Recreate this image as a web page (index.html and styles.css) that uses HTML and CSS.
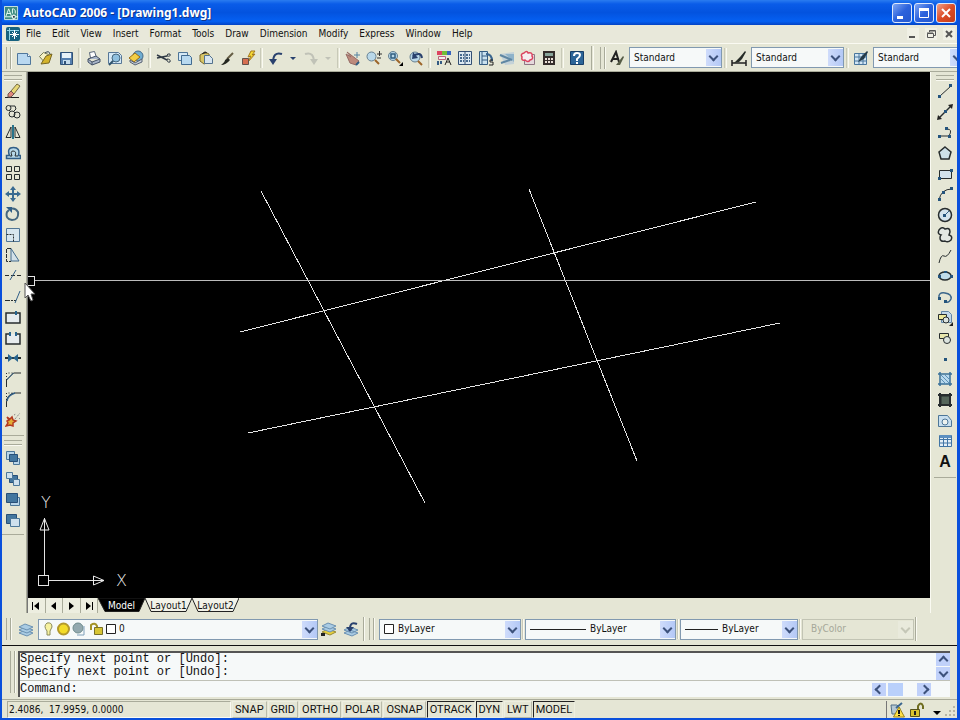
FILE: index.html
```
<!DOCTYPE html>
<html lang="en">
<head>
<meta charset="utf-8">
<title>AutoCAD 2006 - [Drawing1.dwg]</title>
<link rel="stylesheet" href="styles.css">
</head>
<body>
<div class="window">
<header class="titlebar">
  <svg class="app-icon" viewBox="0 0 16 16"><path fill="#3e8b80" stroke="#d5ece4" d="M.5.5h14v14H.5z"/><path fill="none" stroke="#e8fff5" d="M2 11 5 3l3 8M3 8h4M9 3v5M9 3h1q3 1 2 5M1 11.500h14M10.500 9v6"/><path fill="#173d42" stroke="#fff" d="M9 10h3v3H9z"/></svg>
  <h1>AutoCAD 2006 - [Drawing1.dwg]</h1>
  <div class="caption-buttons">
    <button class="cap" aria-label="Minimize"><svg viewBox="0 0 18 18"><path fill="#fff" d="M4 12h6v3H4z"/></svg></button>
    <button class="cap" aria-label="Maximize"><svg viewBox="0 0 18 18"><path fill="none" stroke="#fff" d="M4.500 4.500h9v9h-9z"/><path fill="#fff" d="M4 4h10v3H4z"/></svg></button>
    <button class="cap close" aria-label="Close"><svg viewBox="0 0 18 18"><path stroke="#fff" stroke-width="2" d="m5 5 8 8m0-8-8 8"/></svg></button>
  </div>
</header>
<nav class="menubar">
  <svg class="doc-icon" viewBox="0 0 14 14"><rect width="14" height="14" rx="2" fill="#17627f"/><path fill="none" stroke="#8fd4e8" d="M3.500 1v12M1 3.500h12"/><path stroke="#fff" d="M8.500 3v9M4 7.500h9M6 5l5 5m0-5-5 5"/></svg>
  <button>File</button><button>Edit</button><button>View</button><button>Insert</button><button>Format</button><button>Tools</button><button>Draw</button><button>Dimension</button><button>Modify</button><button>Express</button><button>Window</button><button>Help</button>
  <div class="doc-buttons">
    <button aria-label="Minimize drawing"><svg viewBox="0 0 12 12"><path fill="#555" d="M2 8h6v2H2z"/></svg></button>
    <button aria-label="Restore drawing"><svg viewBox="0 0 12 12"><path fill="none" stroke="#555" d="M4.500 4V2.500h6v5H8M2.500 5.500h6v4h-6zM4 3h6M2 5h6"/></svg></button>
    <button aria-label="Close drawing"><svg viewBox="0 0 12 12"><path stroke="#555" stroke-width="2" d="m3 3 6 6m0-6-6 6"/></svg></button>
  </div>
</nav>
<div class="toolbar standard" role="toolbar" aria-label="Standard">
  <span class="grip"></span>
  <div class="group">
    <button aria-label="New"><svg viewBox="0 0 16 16"><path fill="#b9d8f0" stroke="#50779c" d="M1.500 3.500h10l3 3v8h-13z"/><path fill="#fff" stroke="#50779c" d="M11.500 3.500v3h3"/></svg></button>
    <button aria-label="Open"><svg viewBox="0 0 16 16"><path fill="#f5f1c5" stroke="#777b55" d="m2.500 6.500 4-4 5 2-3 9z"/><path fill="#d3b32c" stroke="#776724" d="m4 14 5-8 6-2-3 9z"/><path fill="none" stroke="#2a3d4c" d="M8 3q4-3 5 1"/></svg></button>
    <button aria-label="Save"><svg viewBox="0 0 16 16"><path fill="#557fae" stroke="#315277" d="M2.500 2.500h12v12h-12z"/><path fill="#e8f2f8" d="M4 3h9v5H4z"/><path fill="#c5dced" d="M5 10h7v4H5z"/><path fill="#315277" d="M6 11h2v3H6z"/></svg></button>
  </div>
  <span class="sep"></span>
  <div class="group">
    <button aria-label="Plot"><svg viewBox="0 0 16 16"><path fill="#fff" stroke="#596678" d="M4.500 8 3.500 2.500l5-1 2 6"/><path fill="#a8b5c9" stroke="#445267" d="m2 9 8-3 4 3v3l-8 3-4-3zM2 9l4 3 8-3M6 12v3"/></svg></button>
    <button aria-label="Plot Preview"><svg viewBox="0 0 16 16"><path fill="#d5e9f6" stroke="#577797" d="M1.500 2.500h10l3 3v8h-13z"/><circle cx="9" cy="8" r="4" fill="#8fc0df" stroke="#46677e"/><path stroke="#31546e" stroke-width="2" d="m6 11-4 4"/></svg></button>
    <button aria-label="Publish"><svg viewBox="0 0 16 16"><circle cx="10" cy="6" r="5" fill="#70add0" stroke="#456a8a"/><path fill="#f2ce45" stroke="#9a6d16" d="m1 8 6-5 5 4-6 5z"/><path fill="#c8cfda" stroke="#576374" d="m2 10 5 3 7-4v3l-7 3-5-3z"/></svg></button>
  </div>
  <span class="sep"></span>
  <div class="group">
    <button aria-label="Cut"><svg viewBox="0 0 16 16"><path fill="none" stroke="#303a45" stroke-width="1.500" d="m1 5 10 5M1 8l10-2"/><path fill="none" stroke="#303a45" d="M11 6q0-3 3-2 1 3-3 2M11 9q4 0 3 3-3 1-3-3"/></svg></button>
    <button aria-label="Copy"><svg viewBox="0 0 16 16"><path fill="#d5e9f5" stroke="#4e7597" d="M1.500 2.500h9v8h-9z"/><path fill="#b8d9ef" stroke="#416b91" d="M4.500 5.500h8l2 2v7h-10z"/></svg></button>
    <button aria-label="Paste"><svg viewBox="0 0 16 16"><path fill="#d8c565" stroke="#77672d" d="m2 5 5-3 4 2 1 8-6 2-4-3z"/><path fill="#d7e5ef" stroke="#54728d" d="M6.500 5.500h5l3 3v5h-8z"/><path stroke="#333" d="m4 4 3-2 2 1"/></svg></button>
    <button aria-label="Match Properties"><svg viewBox="0 0 16 16"><path stroke="#665e45" stroke-width="2" d="m8 9 6-6"/><path fill="#242720" d="m9 8 2 2q-4 5-9 5 4-3 4-5z"/></svg></button>
    <button aria-label="Block Editor"><svg viewBox="0 0 16 16"><path fill="#f6da33" stroke="#a4781d" d="m11 1-3 6 3-1-3 6 7-8-3 1 3-4z"/><path fill="#d66e50" stroke="#63524c" d="M2.500 8.500h6v6h-6z"/></svg></button>
  </div>
  <span class="sep"></span>
  <div class="group">
    <button aria-label="Undo"><svg viewBox="0 0 16 16"><path fill="none" stroke="#29416e" stroke-width="2" d="M14 4Q5 1 5 13"/><path fill="#29416e" d="m1 9 4 6 4-6z"/></svg></button>
    <button class="drop" aria-label="Undo list"><svg viewBox="0 0 6 16"><path fill="#29416e" d="M0 7h6l-3 3z"/></svg></button>
    <button aria-label="Redo"><svg viewBox="0 0 16 16"><path fill="none" stroke="#c0c2b7" stroke-width="2" d="M2 4q9-3 9 9"/><path fill="#c0c2b7" d="m7 9 4 6 4-6z"/></svg></button>
    <button class="drop" aria-label="Redo list"><svg viewBox="0 0 6 16"><path fill="#c0c2b7" d="M0 7h6l-3 3z"/></svg></button>
  </div>
  <span class="sep"></span>
  <div class="group">
    <button aria-label="Pan"><svg viewBox="0 0 16 16"><path fill="#bd8a7c" stroke="#966c65" d="m1 4 5 3-4-5 8 6 4 3-3 4-6-2z"/><path stroke="#5582a0" d="M9 5h6M12 2v6"/><path stroke="#315e82" stroke-width="2" d="m11 15 3-3"/></svg></button>
    <button aria-label="Zoom Realtime"><svg viewBox="0 0 16 16"><circle cx="5.500" cy="6.500" r="4.500" fill="#b9d8e9" stroke="#668091"/><path stroke="#9c6529" stroke-width="2" d="m9 10 4 4"/><path stroke="#333" d="M11 4h5M13.500 1v5M11 8h4"/></svg></button>
    <button aria-label="Zoom Window"><svg viewBox="0 0 16 16"><circle cx="6" cy="6" r="4.500" fill="#b9d8e9" stroke="#668091"/><path fill="none" stroke="#315d80" stroke-width="1.500" d="M4 4h4v4H4z"/><path stroke="#9c6529" stroke-width="2" d="m9 9 4 4"/><path d="M12 16h4v-4z"/></svg></button>
    <button aria-label="Zoom Previous"><svg viewBox="0 0 16 16"><circle cx="7" cy="7" r="5" fill="#b9d8e9" stroke="#668091"/><path stroke="#9c6529" stroke-width="2" d="m10 11 4 4"/><path fill="none" stroke="#29416e" stroke-width="2" d="M14 8q-1-7-9-2"/><path fill="#29416e" d="m5 2-1 7 6-1z"/></svg></button>
  </div>
  <span class="sep"></span>
  <div class="group">
    <button aria-label="Properties"><svg viewBox="0 0 16 16"><path fill="#dd4361" d="M1 1h5v4H1z"/><path fill="#71bd35" d="M6 1h5v4H6z"/><path fill="#3864bd" d="M11 1h4v4h-4z"/><path fill="#f3eeee" stroke="#b9637a" d="M2.500 6.500h7v3h-7z"/><path stroke="#345b83" stroke-width="2" d="M2 11v4m3-4v3"/><path fill="none" stroke="#222" d="m9 15 3-7 3 7m-5-3h4"/></svg></button>
    <button aria-label="DesignCenter"><svg viewBox="0 0 16 16"><path fill="#dbe8f1" stroke="#334f73" d="M1.500 1.500h13v13h-13zM8 2v12"/><path stroke="#45698e" stroke-width="2" stroke-dasharray="2 1" d="M3 5h4m2 0h4M3 8h4m2 0h4M3 11h4m2 0h4"/></svg></button>
    <button aria-label="Tool Palettes"><svg viewBox="0 0 16 16"><path fill="#c9e1ef" stroke="#345c81" d="M1.500 1.500h8v13h-8zM4 2v12M4 6h5m-5 4h5"/><path fill="none" stroke="#3b668f" stroke-width="2" d="M8 4q6 0 6 7"/><path stroke="#222" fill="none" d="M15 10h-3v2h3v3h-4"/></svg></button>
    <button aria-label="Sheet Set Manager"><svg viewBox="0 0 16 16"><path fill="#c4d2d8" d="m1 4 14-2v12l-9 1z"/><path fill="#8fb3ca" d="M6 4h9v8z"/><path fill="none" stroke="#5f87a3" stroke-width="2" d="m1 5 12 5M2 13l9-3"/></svg></button>
    <button aria-label="Markup Set Manager"><svg viewBox="0 0 16 16"><path fill="#e5d9dc" stroke="#8f7784" d="M4.500 4.500h10v10h-10z"/><path fill="#f5edf0" stroke="#db425e" stroke-width="1.500" d="M4 3q3-3 4 0 5-1 4 3 2 3-2 4-2 3-5 0-4 1-3-3-2-3 2-4z"/></svg></button>
    <button aria-label="QuickCalc"><svg viewBox="0 0 16 16"><path fill="#342d2b" d="M2 1h12v14H2z"/><path fill="#87a399" d="M4 3h8v3H4z"/><path stroke="#e9dfd7" stroke-width="2" stroke-dasharray="2 1" d="M4 9h8m-8 3h8"/></svg></button>
  </div>
  <span class="sep"></span>
  <div class="group"><button aria-label="Help"><svg viewBox="0 0 16 16"><path fill="#2c6598" stroke="#173e68" d="M1.500 1.500h13v13h-13z"/><path fill="none" stroke="#fff" stroke-width="2" d="M5 6q0-3 3-3 3 0 3 2 0 2-3 4v2m0 1v2"/></svg></button></div>
  <span class="sep end"></span>
  <span class="grip"></span>
  <svg class="style-icon" viewBox="0 0 16 16"><path fill="none" stroke="#222" stroke-width="2" d="m2 12 5-10 3 10M4 9h6"/><path fill="#555b46" d="m7 15 7-9 1 1-4 8z"/></svg>
  <div class="combo std"><select aria-label="Text style"><option>Standard</option></select><span class="arrow"></span></div>
  <span class="sep"></span>
  <svg class="style-icon" viewBox="0 0 16 16"><path stroke="#222" stroke-width="1.500" d="M1 13h14M1 10v6M15 10v6"/><path fill="#262c27" d="m3 13 6-6 5-6 1 1-4 7-3 3z"/></svg>
  <div class="combo std"><select aria-label="Dimension style"><option>Standard</option></select><span class="arrow"></span></div>
  <span class="sep"></span>
  <svg class="style-icon" viewBox="0 0 16 16"><path fill="#d1e5f4" stroke="#49769d" d="M1.500 3.500h12v11h-12zM2 7h12M2 11h12M6 4v10M10 4v10"/><path fill="#263b48" d="m5 12 3-5 6-6 1 1-4 7z"/></svg>
  <div class="combo std"><select aria-label="Table style"><option>Standard</option></select><span class="arrow"></span></div>
</div>
<main class="workspace">
  <aside class="side left">
    <span class="vgrip"></span>
    <div class="tools modify" role="toolbar" aria-label="Modify">
      <button aria-label="Erase"><svg viewBox="0 0 16 16"><path stroke="#222" d="M0 14.500h14"/><path fill="#e7d878" stroke="#756a3f" d="m6 8 6-7 3 2-6 8z"/><path fill="#df887d" stroke="#71564f" d="m3 11 3-3 3 3-3 3H3z"/></svg></button>
      <button aria-label="Copy object"><svg viewBox="0 0 16 16"><circle cx="3.500" cy="4" r="2.500"/><circle cx="7" cy="10" r="3"/><circle cx="12" cy="11" r="3"/><path d="M5 2h5l1 3-2 2M4 6l2 2"/></svg></button>
      <button aria-label="Mirror"><svg viewBox="0 0 16 16"><path d="M1 13.500h5V3zM15 13.500h-5V3z"/><path stroke="#28748c" stroke-width="2" d="M8 1v14"/></svg></button>
      <button aria-label="Offset"><svg viewBox="0 0 16 16"><path fill="#b7d8e8" stroke="#315f87" stroke-width="1.500" d="M1.500 13.500v-3h3q-3-8 4-8t5 8h2v3z"/><path d="M5 11h2q-2-5 1-5 4 0 2 5h3"/></svg></button>
      <button aria-label="Array"><svg viewBox="0 0 16 16"><path d="M1.500 1.500h5v5h-5zM9.500 1.500h5v5h-5zM1.500 9.500h5v5h-5zM9.500 9.500h5v5h-5z"/></svg></button>
      <button aria-label="Move"><svg viewBox="0 0 16 16"><path stroke="#396b91" stroke-width="2" d="M8 2v12M2 8h12"/><path fill="#396b91" stroke="none" d="m8 0 3 4H5zm0 16 3-4H5zM0 8l4-3v6zm16 0-4-3v6z"/></svg></button>
      <button aria-label="Rotate"><svg viewBox="0 0 16 16"><path stroke="#44677f" stroke-width="2" d="M5 3q5-2 8 3 1 8-6 8-7-1-5-8l2-2"/><path fill="#315f87" stroke="none" d="M1 1h6v6z"/></svg></button>
      <button aria-label="Scale"><svg viewBox="0 0 16 16"><path fill="#d7e6ee" stroke="#517694" d="M1.500 1.500h13v13h-13z"/><path stroke-dasharray="2 1" d="M1.500 7.500h7v7"/></svg></button>
      <button aria-label="Stretch"><svg viewBox="0 0 16 16"><path fill="#d4e2e9" stroke="#426b8c" d="M6 1.500 14 14H6z"/><path d="M6 1.500H1.500v13H6" stroke-dasharray="4 1"/></svg></button>
      <button aria-label="Trim"><svg viewBox="0 0 16 16"><path stroke-dasharray="4 2" d="M0 7.500h16"/><path stroke="#315f87" d="m5 12 6-10"/></svg></button>
      <button aria-label="Extend"><svg viewBox="0 0 16 16"><path stroke-dasharray="5 1 2 1" d="M0 11.500h11"/><path stroke="#315f87" d="m10 14 5-12"/></svg></button>
      <button aria-label="Break at Point"><svg viewBox="0 0 16 16"><path fill="#e7ecee" stroke-width="1.500" d="M1 4h14v10H1z"/><path stroke="#28658f" stroke-width="2" d="M11 2v4"/></svg></button>
      <button aria-label="Break"><svg viewBox="0 0 16 16"><path fill="#e7ecee" stroke="none" d="M1 4h14v10H1z"/><path stroke-width="1.500" d="M5 4H1v10h14V4h-4"/><path stroke="#28658f" stroke-width="2" d="M5 2v4m6-4v4"/></svg></button>
      <button aria-label="Join"><svg viewBox="0 0 16 16"><path stroke-width="2" d="M0 8h16"/><path fill="#28658f" stroke="none" d="m3 4 5 4-5 4zm10 0L8 8l5 4z"/></svg></button>
      <button aria-label="Chamfer"><svg viewBox="0 0 16 16"><path d="M1.500 16V9l7-7H16"/><path stroke="#315f87" d="m1.500 9 7-7"/><path stroke-dasharray="1 2" d="M1.500 9V2H8"/></svg></button>
      <button aria-label="Fillet"><svg viewBox="0 0 16 16"><path d="M1.500 16v-5Q2 3 10 2h6"/><path stroke="#315f87" stroke-width="1.500" d="M2 10q1-6 8-8"/><path stroke-dasharray="1 2" d="M1.500 9V2H8"/></svg></button>
      <button aria-label="Explode"><svg viewBox="0 0 16 16"><path stroke="#777" stroke-dasharray="1 1" d="m10 7 5-6m-1 6 1-1M9 3l2-1"/><path fill="#e2ad34" stroke="#b43820" stroke-width="1.500" d="m2 5 3 2 2-2 1 3 3 1-3 2v3l-3-1-4 1 2-3-1-2 2-1z"/></svg></button>
    </div>
    <span class="vgrip"></span>
    <div class="tools order" role="toolbar" aria-label="Draw Order">
      <button aria-label="Bring to Front"><svg viewBox="0 0 16 16"><path fill="#b9d6e9" stroke="#4d7899" d="M1.500 1.500h8v8h-8zM8.500 8.500h6v6h-6z"/><path fill="#43779f" stroke="#285078" d="M4.500 4.500h8v7h-8z"/></svg></button>
      <button aria-label="Send to Back"><svg viewBox="0 0 16 16"><path fill="#43779f" stroke="#285078" d="M4.500 4.500h8v7h-8z"/><path fill="#cfe1ed" stroke="#4d7899" d="M1.500 1.500h6v6h-6zM8.500 8.500h6v6h-6z"/></svg></button>
      <button aria-label="Bring Above Objects"><svg viewBox="0 0 16 16"><path fill="#b9d6e9" stroke="#4d7899" d="M5.500 6.500h9v8h-9z"/><path fill="#43779f" stroke="#285078" d="M1.500 2.500h11v9h-11z"/></svg></button>
      <button aria-label="Send Under Objects"><svg viewBox="0 0 16 16"><path fill="#43779f" stroke="#285078" d="M1.500 2.500h10v9h-10z"/><path fill="#cfe1ed" stroke="#4d7899" d="M5.500 6.500h9v8h-9z"/></svg></button>
    </div>
  </aside>
  <div class="document">
    <div class="canvas">
      <svg class="drawing" viewBox="28 72 902 526" preserveAspectRatio="xMinYMin slice" role="img" aria-label="Drawing">
        <g fill="none" stroke="#e4e4e4" shape-rendering="crispEdges"><path d="m261 191 164 312M529 189l108 272M240 332l516-130M248 433l532-110"/><path stroke="#bcbcbc" d="M34 280.500h410M446 280.500h484"/><path d="M28 276.500h6.500v9H28"/><path d="M38.500 575.500h10v10h-10zM44.500 575v-57M49 580.500h55"/></g>
        <path fill="none" stroke="#ededed" d="M44.500 518.500 49 530h-9zM104 580.500 93.500 576v9z"/>
        <text x="41" y="508">Y</text><text x="116" y="586">X</text>
      </svg>
      <svg class="cursor" viewBox="0 0 12 20"><path fill="#fff" stroke="#555" d="M1 1v15l3-3 3 6 2-1-2-6h4z"/></svg>
    </div>
    <div class="tabs">
      <div class="tab-nav">
        <button aria-label="First tab"><svg viewBox="0 0 10 10"><path d="M1 1h1v8H1zM8 1v8L3 5z"/></svg></button>
        <button aria-label="Previous tab"><svg viewBox="0 0 10 10"><path d="M7 1v8L2 5z"/></svg></button>
        <button aria-label="Next tab"><svg viewBox="0 0 10 10"><path d="M3 1v8l5-4z"/></svg></button>
        <button aria-label="Last tab"><svg viewBox="0 0 10 10"><path d="M8 1h1v8H8zM2 1v8l5-4z"/></svg></button>
      </div>
      <button class="tab active"><svg viewBox="0 0 47 15" preserveAspectRatio="none"><path d="M0 0h47l-6 13.500H7z"/></svg><span>Model</span></button>
      <button class="tab"><svg viewBox="0 0 47 15" preserveAspectRatio="none"><path d="m0 0 6 13.500h35L47 0"/></svg><span>Layout1</span></button>
      <button class="tab"><svg viewBox="0 0 47 15" preserveAspectRatio="none"><path d="m0 0 6 13.500h35L47 0"/></svg><span>Layout2</span></button>
    </div>
  </div>
  <aside class="side right">
    <span class="vgrip"></span>
    <div class="tools draw" role="toolbar" aria-label="Draw">
      <button aria-label="Line"><svg viewBox="0 0 16 16"><path d="M3 13 14 3"/><path class="node" d="M1 12h3v3H1zM12 1h3v3h-3z"/></svg></button>
      <button aria-label="Construction Line"><svg viewBox="0 0 16 16"><path stroke-width="1.500" d="M2 14 14 2"/><path fill="#222" stroke="none" d="m0 16 1-5 4 4zM16 0l-5 1 4 4z"/><path class="node" d="M7 6h3v3H7z"/></svg></button>
      <button aria-label="Polyline"><svg viewBox="0 0 16 16"><path d="M3 12h9q4-7-2-7H8"/><path class="node" d="M1 11h3v3H1zM11 11h3v3h-3zM8 3h3v3H8z"/></svg></button>
      <button aria-label="Polygon"><svg viewBox="0 0 16 16"><path fill="#cee1e9" stroke-width="1.500" d="m8 2 6 5-2 7H4L2 7z"/></svg></button>
      <button aria-label="Rectangle"><svg viewBox="0 0 16 16"><path fill="#d2e3ed" d="M2.500 4.500h12v8h-12z"/><path class="node" d="M1 11h3v3H1zM13 3h3v3h-3z"/></svg></button>
      <button aria-label="Arc"><svg viewBox="0 0 16 16"><path d="M2 14Q4 3 15 3"/><path class="node" d="M1 12h3v3H1zM5 5h3v3H5zM13 1h3v3h-3z"/></svg></button>
      <button aria-label="Circle"><svg viewBox="0 0 16 16"><circle cx="8" cy="8" r="6.500" fill="#d4e4ed" stroke-width="1.500"/><path stroke="#315f87" d="m8 8 4-4"/><path class="node" d="M6 7h3v3H6z"/></svg></button>
      <button aria-label="Revision Cloud"><svg viewBox="0 0 16 16"><path fill="#e3e8e4" stroke-width="1.500" d="M4 8Q0 7 2 3q3-4 6-1 5-2 5 3-1 3-1 3 4 1 2 5-3 3-6 1-5 1-5-3 0-2 1-3z"/></svg></button>
      <button aria-label="Spline"><svg viewBox="0 0 16 16"><path d="M2 15q2-9 5-7t7-6"/></svg></button>
      <button aria-label="Ellipse"><svg viewBox="0 0 16 16"><ellipse cx="8" cy="8" rx="6" ry="4" fill="#c0dce9" stroke-width="1.500"/><path class="node" d="M1 7h3v3H1zM13 7h3v3h-3zM7 3h3v2H7z"/></svg></button>
      <button aria-label="Ellipse Arc"><svg viewBox="0 0 16 16"><path stroke="#3b668b" stroke-width="1.500" d="M2 9q-1-6 6-5 7 1 6 6-2 4-5 3"/><path class="node" d="M1 8h3v3H1zM7 11h3v3H7z"/></svg></button>
      <button aria-label="Insert Block"><svg viewBox="0 0 16 16"><path fill="#c3d9eb" stroke="#6286a5" d="M4.500 1.500h7l3 3v8h-10z"/><path fill="#ede99b" d="M1.500 4.500h8v5h-8z"/><circle cx="9" cy="10" r="3" fill="#dce4df"/><path fill="#222" stroke="none" d="M12 16h4v-4z"/></svg></button>
      <button aria-label="Make Block"><svg viewBox="0 0 16 16"><path fill="#e7e6ac" d="M2.500 3.500h9v5h-9z"/><circle cx="10" cy="10" r="3.500" fill="#dce4df"/></svg></button>
      <button aria-label="Point"><svg viewBox="0 0 16 16"><path class="node" d="M7 7h3v3H7z"/></svg></button>
      <button aria-label="Hatch"><svg viewBox="0 0 16 16"><path fill="#b9d9ee" stroke="none" d="M4 4h9v9H4z"/><path stroke="#397099" stroke-width="1.500" d="M3 1v14M13 1v14M1 3h14M1 13h14"/><path stroke="#5c91b5" d="m4 8 5 5M4 4l8 8M8 4l5 5"/></svg></button>
      <button aria-label="Gradient"><svg viewBox="0 0 16 16"><path fill="#55665b" d="M4 4h9v9H4z"/><path stroke-width="2" d="M3 1v14M13 1v14M1 3h14M1 13h14"/></svg></button>
      <button aria-label="Region"><svg viewBox="0 0 16 16"><path fill="#c8dfef" stroke="#4d7698" d="M1.500 2.500h9l4 5v6h-13z"/><circle cx="8" cy="9" r="3" fill="#edf2ef" stroke="#4d7698"/></svg></button>
      <button aria-label="Table"><svg viewBox="0 0 16 16"><path fill="#e4eff7" stroke="#4175a5" d="M2.500 2.500h12v11h-12zM3 6.500h11M3 10h11M6.500 3v10M10.500 3v10"/><path fill="#5c8fc0" stroke="none" d="M3 2h11v3H3z"/></svg></button>
      <button aria-label="Multiline Text" class="letter">A</button>
    </div>
  </aside>
</main>
<div class="toolbar layers" role="toolbar" aria-label="Layers">
  <span class="grip"></span>
  <button class="tool" aria-label="Layer Properties Manager"><svg viewBox="0 0 16 16"><g fill="#a9cbe3" stroke="#6b91b2"><path d="m1 12 6-3 8 3-6 3z"/><path d="m1 9 6-3 8 3-6 3z"/><path d="m1 6 6-3 8 3-6 3z"/></g></svg></button>
  <div class="combo layer">
    <select aria-label="Layer"><option>0</option></select>
    <svg class="preview" viewBox="0 0 74 16"><path fill="#f7f2a0" stroke="#8a8b5d" d="M4 10Q0 5 4 2q5-1 5 4L7 10v4H4z"/><circle cx="20.500" cy="8" r="5.500" fill="#f3dc28" stroke="#b3992c" stroke-width="2"/><circle cx="35" cy="7" r="5" fill="#93a9af" stroke="#6e8b8d"/><path fill="none" stroke="#7fa0ba" d="M34 14h7V5"/><path fill="none" stroke="#a49327" stroke-width="2" d="M48 9V4q4-3 6 1v3"/><path fill="#d7c534" stroke="#776f2b" d="M51.500 6.500h8v7h-8z"/><path fill="#fff" stroke="#222" d="M63.500 3.500h9v9h-9z"/></svg>
    <span class="arrow"></span>
  </div>
  <button class="tool" aria-label="Make Object's Layer Current"><svg viewBox="0 0 16 16"><g fill="#a9cbe3" stroke="#6b91b2"><path fill="#e6cf3b" stroke="#988a37" d="m1 11 6-3 8 3-6 3z"/><path d="m1 8 6-3 8 3-6 3z"/><path d="m1 5 6-3 8 3-6 3z"/></g><path fill="#222" d="M0 12h4v3H0z"/></svg></button>
  <button class="tool" aria-label="Layer Previous"><svg viewBox="0 0 16 16"><g fill="#a9cbe3" stroke="#6b91b2"><path d="m1 12 6-3 8 3-6 3zM1 9l6-3 8 3-6 3z"/></g><path fill="none" stroke="#29416e" stroke-width="2" d="M14 3Q7 0 7 8"/><path fill="#29416e" d="m3 6 4 5 4-5z"/></svg></button>
  <span class="sep end"></span>
  <span class="grip"></span>
  <div class="combo color"><select aria-label="Color"><option>ByLayer</option></select><svg class="preview" viewBox="0 0 10 16"><path fill="#fff" stroke="#222" d="M.5 3.500h9v9h-9z"/></svg><span class="arrow"></span></div>
  <span class="sep"></span>
  <div class="combo linetype"><select aria-label="Linetype"><option>ByLayer</option></select><svg class="preview" viewBox="0 0 56 16"><path stroke="#222" d="M0 8.500h56"/></svg><span class="arrow"></span></div>
  <span class="sep"></span>
  <div class="combo lineweight"><select aria-label="Lineweight"><option>ByLayer</option></select><svg class="preview" viewBox="0 0 33 16"><path stroke="#222" d="M0 8.500h33"/></svg><span class="arrow"></span></div>
  <span class="sep"></span>
  <div class="combo plot"><select aria-label="Plot style" disabled><option>ByColor</option></select><span class="arrow"></span></div>
  <span class="sep end"></span>
</div>
<section class="command">
  <span class="grip"></span>
  <div class="console">
    <div class="history">
      <div class="log"><p>Specify next point or [Undo]:</p><p>Specify next point or [Undo]:</p></div>
      <div class="vscroll"><button class="scroll up" aria-label="Scroll up"></button><button class="scroll" aria-label="Scroll down"></button></div>
    </div>
    <div class="entry">
      <label for="cmd">Command:</label><input id="cmd" type="text">
      <div class="hscroll"><button class="scroll prev" aria-label="Scroll left"></button><span class="thumb"></span><button class="scroll next" aria-label="Scroll right"></button></div>
    </div>
  </div>
</section>
<footer class="status">
  <output class="coords">2.4086,&nbsp; 17.9959, 0.0000</output>
  <button>SNAP</button><button>GRID</button><button>ORTHO</button><button>POLAR</button><button>OSNAP</button><button class="on">OTRACK</button><button class="on">DYN</button><button>LWT</button><button class="on">MODEL</button>
  <div class="tray">
    <svg viewBox="0 0 16 16"><path fill="#b5c8d4" stroke="#516f87" d="M2 3h6l3 3-3 6H3z"/><path stroke="#3b668f" stroke-width="2" d="m7 6 6-5"/><path fill="#ffe045" stroke="#9b841a" d="m10 5 5.500 10h-11z"/><path stroke="#111" stroke-width="2" d="M10 8v4m0 1v1"/></svg>
    <svg viewBox="0 0 16 16"><path fill="none" stroke="#6f6d20" stroke-width="2" d="M9 8V4q3-5 5 0v3"/><path fill="#dac430" stroke="#57531c" d="M1.500 7.500h9v7h-9z"/><path stroke="#222" stroke-width="2" d="M6 9v4"/></svg>
    <button class="tray-menu" aria-label="Status bar menu"><svg viewBox="0 0 8 16"><path d="M0 9h8l-4 4z"/></svg></button>
  </div>
  <svg class="resize" viewBox="0 0 12 12"><path fill="#b6b6a5" d="M8 0h2v2H8zM8 4h2v2H8zM8 8h2v2H8zM4 4h2v2H4zM4 8h2v2H4zM0 8h2v2H0z"/></svg>
</footer>
</div>
</body>
</html>
```
FILE: styles.css
```
* { box-sizing: border-box; }
:root {
  --face: #e5e6d5;
  --edge: #a9ab9a;
  --light: #fafaf2;
  --blue: #0a50dc;
  --field: #f6f9f9;
}
body, h1, p { margin: 0; }
body, button, select { font: 10px/12px "DejaVu Sans Condensed", "DejaVu Sans", sans-serif; color: #111; }
button { padding: 0; border: 0; background: none; }
svg { display: block; }
.window {
  display: flex;
  flex-direction: column;
  height: 100vh;
  min-height: 600px;
  background: var(--face);
  border: solid var(--blue);
  border-width: 0 3px 2px 2px;
  overflow: hidden;
}

.titlebar {
  display: flex;
  align-items: center;
  flex: none;
  gap: 4px;
  height: 25px;
  padding: 1px 0 0 2px;
  background: linear-gradient(#2a7cf0, #0a5ce8 16%, #0353df 50%, #0560f2 85%, #0443c4);
}
.app-icon { width: 15px; height: 15px; }
.titlebar h1 {
  flex: 1;
  font: bold 12px/18px "Noto Sans", sans-serif;
  color: #fff;
  text-shadow: 1px 1px #10358a;
  white-space: nowrap;
}
.caption-buttons { display: flex; gap: 2px; padding-right: 1px; }
.cap {
  width: 20px;
  height: 20px;
  border: 1px solid #dfe9fb;
  border-radius: 3px;
  background: linear-gradient(135deg, #7fa6f4, #2c62dc 50%, #2458cf);
}
.cap.close { background: linear-gradient(135deg, #f0a089, #dc4c26 50%, #c43c18); }
.cap svg { width: 18px; height: 18px; }

.menubar {
  display: flex;
  align-items: center;
  flex: none;
  height: 19px;
  padding-left: 4px;
  background: #e8e8da;
  border-bottom: 1px solid var(--light);
}
.menubar > button { padding: 0 5px 0 6px; }
.doc-icon { width: 14px; height: 14px; }
.doc-buttons { display: flex; gap: 6px; margin-left: auto; padding-right: 2px; }
.doc-buttons button { width: 12px; background: #f0f0e5; }
.doc-buttons svg { width: 12px; height: 12px; }

.toolbar {
  display: flex;
  align-items: center;
  flex: none;
  gap: 2px;
  height: 28px;
  padding-left: 4px;
  overflow: hidden;
  border-bottom: 1px solid var(--edge);
}
.grip {
  flex: none;
  width: 5px;
  height: 22px;
  border: solid var(--edge);
  border-width: 0 1px;
  box-shadow: 1px 0 var(--light);
}
.sep {
  flex: none;
  width: 2px;
  height: 20px;
  border-left: 1px solid #c8c9b8;
  border-right: 1px solid var(--light);
}
.standard .sep { width: 3px; }
.sep.end { height: 24px; margin: 0 4px 0 2px; border-left-color: var(--edge); }
.group { display: flex; flex: none; align-items: center; }
.group button { display: grid; place-items: center; width: 21px; height: 22px; }
.group button.drop { width: 14px; }
.group svg { width: 16px; height: 16px; }
.group .drop svg { width: 6px; }
.style-icon { flex: none; width: 16px; height: 16px; margin: 0 2px; }

.combo {
  display: grid;
  grid-template-columns: 1fr 15px;
  align-items: center;
  flex: none;
  height: 21px;
  border: 1px solid #8199b0;
  background: var(--field);
}
.combo > * { grid-row: 1; }
.combo select {
  grid-column: 1 / 3;
  width: 100%;
  height: 19px;
  padding: 0 15px 0 4px;
  border: 0;
  background: none;
  appearance: none;
}
.combo .preview {
  grid-column: 1;
  height: 16px;
  margin-left: 4px;
  justify-self: start;
  pointer-events: none;
}
.arrow {
  display: grid;
  place-items: center;
  grid-column: 2;
  height: 17px;
  background: linear-gradient(90deg, #cfdcfb, #b3c8f6);
  pointer-events: none;
}
.arrow::after, .scroll::after {
  content: "";
  width: 5px;
  height: 5px;
  border: solid #3d527c;
  border-width: 0 2px 2px 0;
  transform: translateY(-1px) rotate(45deg);
}
.combo.std { width: 93px; }

.workspace { display: flex; flex: 1; min-height: 0; }
.side {
  display: flex;
  flex-direction: column;
  flex: none;
  align-items: center;
  padding-top: 3px;
}
.left { width: 25px; padding-right: 2px; border-right: 1px solid var(--edge); }
.right { width: 27px; padding-left: 2px; border-left: 1px solid var(--light); }
.vgrip {
  flex: none;
  width: 18px;
  height: 5px;
  border: solid var(--edge);
  border-width: 1px 0;
  box-shadow: 0 1px var(--light);
}
.tools { display: grid; grid-auto-rows: 1fr; width: 22px; border-bottom: 1px solid var(--edge); }
.modify { height: 356px; padding: 1px 0 5px; margin-bottom: 4px; }
.order { height: 90px; padding: 3px 0 4px; }
.draw { height: 398px; padding: 1px 0 5px; }
.tools button { display: grid; place-items: center; }
.tools svg { width: 16px; height: 16px; fill: none; stroke: #272d2e; }
.tools .node { fill: #24547d; stroke: none; }
.tools .letter { font: bold 16px/20px "Liberation Sans", sans-serif; }

.document { display: flex; flex-direction: column; flex: 1; min-width: 0; border-left: 1px solid #777; }
.canvas { position: relative; flex: 1; min-height: 0; background: #000; }
.drawing { width: 100%; height: 100%; }
.drawing text { font: 200 16px "DejaVu Sans", sans-serif; fill: #ededed; }
.cursor { position: absolute; left: -4px; top: 210px; width: 12px; height: 20px; }
.tabs { display: flex; flex: none; height: 15px; }
.tab-nav { display: flex; width: 70px; }
.tab-nav button { display: grid; flex: 1; place-items: center; background: #edeee0; border-right: 1px solid var(--edge); }
.tab-nav svg { width: 10px; height: 10px; }
.tab { display: grid; align-items: center; justify-items: center; width: 47px; }
.tab svg, .tab span { grid-area: 1 / 1; }
.tab svg { width: 47px; height: 15px; fill: #f2f2e8; stroke: #222; }
.tab.active svg { fill: #000; }
.tab.active { color: #fff; }

.layers { gap: 1px; height: 32px; border-bottom: 0; }
.layers .grip { margin-right: 4px; }
.layers .tool { margin-right: 1px; }
.tool { flex: none; width: 20px; }
.tool svg { width: 16px; height: 16px; margin: auto; }
.layer { width: 280px; }
.layer .preview { width: 74px; }
.layer select { padding-left: 80px; }
.layers .sep.end { margin: 0 3px 0 0; }
.color { width: 142px; }
.color .preview { width: 10px; }
.color select { padding-left: 18px; }
.linetype { width: 151px; }
.linetype .preview { width: 56px; }
.linetype select { padding-left: 64px; }
.lineweight { width: 118px; }
.lineweight .preview { width: 33px; }
.lineweight select { padding-left: 41px; }
.plot { width: 112px; border-color: #c2c4b4; background: none; }
.plot select { padding-left: 8px; color: #a6a899; opacity: 1; }
.plot .arrow { background: #e9eadc; }
.plot .arrow::after { border-color: #c5c7b7; }

.command {
  display: flex;
  flex: none;
  gap: 3px;
  height: 54px;
  padding: 5px 7px 0 8px;
  border-top: 1px solid #111;
}
.command .grip { height: 42px; }
.console {
  display: flex;
  flex: 1;
  flex-direction: column;
  min-width: 0;
  height: 46px;
  background: var(--field);
  border: solid #555;
  border-width: 2px 0 0 2px;
}
.history { display: flex; height: 28px; border-bottom: 1px solid #bfc1b7; }
.log { flex: 1; overflow: hidden; }
.log, .entry label, .entry input { font: 12px/13px "Liberation Mono", monospace; }
.vscroll { display: flex; flex-direction: column; justify-content: space-between; width: 14px; }
.scroll { display: grid; place-items: center; width: 14px; height: 13px; background: #c0d1fa; }
.up::after { transform: translateY(1px) rotate(225deg); }
.prev::after { transform: rotate(135deg); }
.next::after { transform: rotate(-45deg); }
.entry { display: flex; align-items: center; height: 16px; }
.entry input { flex: 1; min-width: 0; height: 14px; padding: 0; border: 0; background: none; outline: 0; }
.hscroll { display: flex; width: 78px; gap: 2px; }
.thumb { width: 15px; margin-right: 12px; background: #b9d0fb; }

.status {
  display: flex;
  align-items: stretch;
  flex: none;
  gap: 1px;
  height: 19px;
  padding: 1px 0 0 5px;
  border-top: 1px solid var(--edge);
}
.status > button { padding: 1px 2px; border: 1px solid; border-color: #edeee0 #b9bbaa #b9bbaa #edeee0; }
.status > button { font: 11px/14px Roboto, sans-serif; }
.status > button.on { border-color: #222 #edeee0 #edeee0 #222; }
.coords {
  width: 224px;
  padding: 1px;
  font: 10px/14px "DejaVu Sans Condensed", sans-serif;
  border: 1px solid;
  border-color: var(--edge) var(--light) var(--light) var(--edge);
}
.tray { display: flex; align-items: center; gap: 4px; margin-left: auto; padding-left: 2px; border-left: 1px solid #777; }
.tray svg { width: 16px; height: 16px; }
.tray .tray-menu { margin-left: 4px; }
.tray-menu svg { width: 8px; }
.resize { align-self: end; width: 12px; height: 12px; margin-left: 3px; }
```
